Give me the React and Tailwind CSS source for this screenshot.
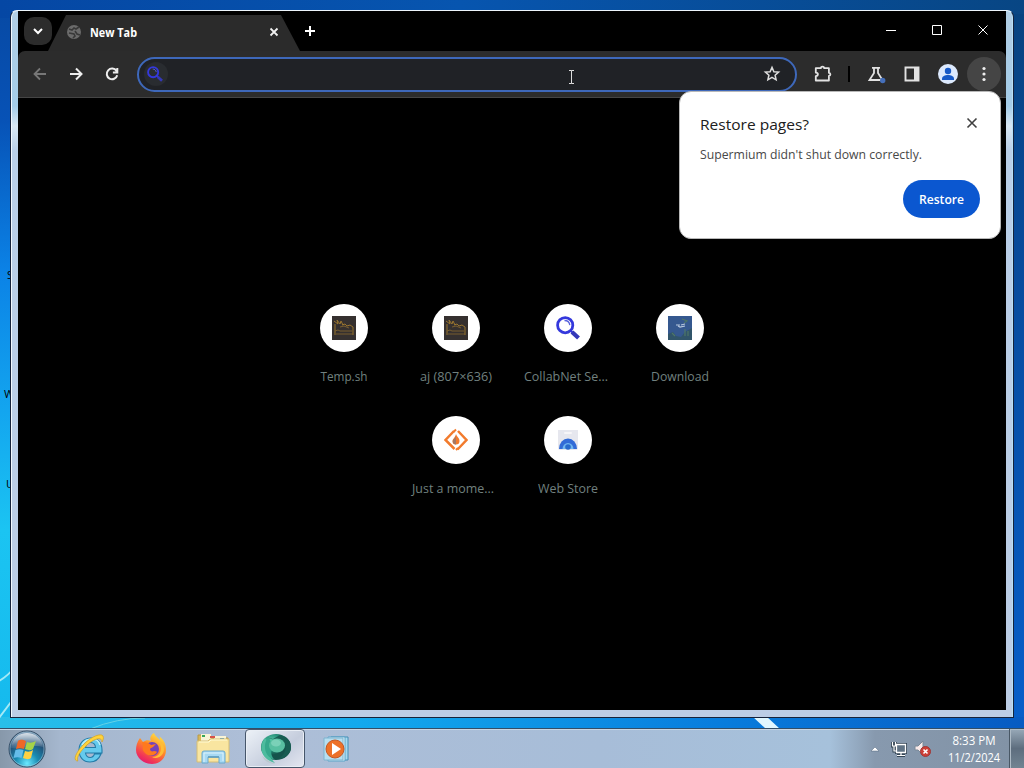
import React from "react";

const TempIcon = () => (
  <svg className="size-6" viewBox="0 0 24 24" fill="none">
    <path d="M0 0h24v24H0z" fill="#35302f" />
    <path d="M2 5l4 3-1-4 3 4 1-3 2 4M3 8v11M21 11v8M10 9l3-1 2 2 3-1 3 2" stroke="#99752f" strokeWidth="1" />
    <path d="M3 15l3-1 2 1h12M4 18h17M8 11l4-1 5 2" stroke="#806330" strokeWidth=".9" />
  </svg>
);

const LensIcon = ({ className }) => (
  <svg className={className} viewBox="0 0 24 24" fill="none">
    <circle cx="9.2" cy="9.2" r="7.6" stroke="#3438dc" strokeWidth="2.8" />
    <path d="M8.5 4.5c3 0 5 2 5.300 4.600" stroke="#5b64de" strokeWidth="1.300" />
    <path d="M14.500 14.500l2 2" stroke="#3438dc" strokeWidth="2" />
    <path d="M16 16l6.500 6" stroke="#3438b8" strokeWidth="4.200" />
  </svg>
);

const DownloadIcon = () => (
  <svg className="size-6" viewBox="0 0 24 24" fill="none">
    <path d="M0 0h24v24H0z" fill="#35588f" />
    <path d="M0 18l5-2 3 4 5 1 4-5 7-4v12H0z" fill="#31556a" />
    <path d="M14 3l5 2-3 2M4 17l3 3M17 13v7M20 15v5" stroke="#4e7668" strokeWidth="1.200" />
    <path d="M8 9h4m1 0l4-1M10 10l2 1 5-1" stroke="#b8c8df" strokeWidth="1.200" />
  </svg>
);

const FlameIcon = () => (
  <svg className="size-6" viewBox="0 0 24 24" fill="none">
    <path d="M10 3l-8.500 9 9 9M14 3l8.500 9-9 9.500" stroke="#f27b2d" strokeWidth="2.500" />
    <path d="M12 1.500L9.500 4M14 20l-2 2" stroke="#f27b2d" strokeWidth="2" />
    <path d="M12 6c1 3 3.500 4 3.500 7a3.500 3.500 0 01-7 0c0-2 3-4 3.500-7z" fill="#f27b2d" />
    <path d="M12 8v8.500c-2 0-3.300-1-3.300-3.300C8.700 11.500 11.500 10 12 8z" fill="#a67863" />
  </svg>
);

const StoreIcon = () => (
  <svg className="size-6" viewBox="0 0 24 24" fill="none">
    <path d="M2 2h20v18a2 2 0 01-2 2H4a2 2 0 01-2-2z" fill="#e6e7ee" />
    <rect x="8" y="4" width="8" height="2" rx="1" fill="#f7f6f8" />
    <path d="M3 21a9 10.500 0 0118 0z" fill="#326bd7" />
    <path d="M6.500 21a5.500 6 0 0111 0z" fill="#70b6ef" />
    <circle cx="12" cy="19" r="2.800" fill="#2869cc" />
  </svg>
);

const Tile = ({ label, children, width, center = 56 }) => (
  <div className="flex h-28 w-28 flex-col items-center pt-4">
    <div className="flex size-12 shrink-0 items-center justify-center rounded-full bg-white">{children}</div>
    <svg className="mt-[15px] h-5 w-28 overflow-visible" viewBox="0 0 112 20">
      <text x={center} y="14" textAnchor="middle" textLength={width} lengthAdjust="spacingAndGlyphs" className="fill-[#71807f] text-[13px]">{label}</text>
    </svg>
  </div>
);

const StartIcon = () => (
  <svg className="size-[38px]" viewBox="0 0 38 38">
    <defs>
      <radialGradient id="orb" cx="50%" cy="90%" r="90%">
        <stop stopColor="#6ce9ff" /><stop offset=".35" stopColor="#188bb2" /><stop offset=".7" stopColor="#234f76" /><stop offset="1" stopColor="#7a97b3" />
      </radialGradient>
      <linearGradient id="shine" x2="0" y2="1"><stop stopColor="#fff" stopOpacity=".75" /><stop offset="1" stopColor="#fff" stopOpacity=".08" /></linearGradient>
    </defs>
    <circle cx="19" cy="19" r="18" fill="url(#orb)" stroke="#354d65" />
    <circle cx="19" cy="19" r="17" fill="none" stroke="#b1d6e5" strokeOpacity=".5" />
    <path d="M3 18C4 8 11 3 19 3s15 5 16 14c-9-3-21 2-32 1z" fill="url(#shine)" />
    <path d="M10 11c3-2 5-1 8 0l-2 8c-3-1-5-1-8 0z" fill="#ef6727" />
    <path d="M19 12c3 1 5 1 9-1l-3 8c-3 2-5 1-8 0z" fill="#a5d348" />
    <path d="M7.500 20c3-1 5-1 8 0l-2 8c-3-1-5-1-8 0z" fill="#65bce9" />
    <path d="M17 21c3 1 5 1 8-1l-2 8c-3 2-5 1-8 0z" fill="#ffd143" />
  </svg>
);

const ExplorerIcon = () => (
  <svg className="size-8" viewBox="0 0 32 32" fill="none">
    <path d="M28 21c-2 5-6 8-11 8C10 29 6 24 6 17S11 5 18 5s11 5 11 12v3H12.500c.5 3 2 4.500 4.700 4.500 2 0 3.300-1 4.300-3.500zM12.500 14.500h10c0-3-2-5-5-5s-4.500 2-5 5z" fill="#65caed" stroke="#237ca8" strokeWidth="1.100" />
    <path d="M9 12c2-4 6-6 10-6 4 0 7 2 8 6" stroke="#baf0fb" strokeWidth="1.500" />
    <path d="M5 28C-1 28 3 19 11 11 19 3 28 0 30 3c1 2 0 4-1 6 0-7-11-2-18 6-5 5-8 11-6 13z" fill="#ffd33c" stroke="#d1a126" strokeWidth=".7" />
  </svg>
);

const FirefoxIcon = () => (
  <svg className="size-8" viewBox="0 0 32 32">
    <defs>
      <linearGradient id="fox" x1=".8" y1="0" x2=".25" y2="1"><stop stopColor="#ffe94a" /><stop offset=".45" stopColor="#ff8a28" /><stop offset=".8" stopColor="#f23756" /><stop offset="1" stopColor="#e01674" /></linearGradient>
    </defs>
    <path d="M5 5l3 4c3-2 5-2 8-1-2-4 1-7 3-8 1 3 3 4 6 7 0-2 0-3-1-4 5 4 7 8 7 14 0 8-6 14-14 14S1 25 1 17c0-4 1-8 4-12z" fill="url(#fox)" />
    <circle cx="17" cy="16" r="7" fill="#7541ba" />
    <path d="M7 9c5 0 7 1 9 3l5-1-3 3c-1 1-3 1-3 2 0 2 2 3 4 2 2 0 3 1 3 1-2 4-8 5-12 1-2-2-3-4-2-7z" fill="#ff791e" />
    <path d="M17 7c6 0 9 4 9 8 0 6-4 9-9 9 5 3 12-1 12-8S23 7 17 7z" fill="#ffbd36" />
  </svg>
);

const FolderIcon = () => (
  <svg className="h-[31px] w-[35px]" viewBox="0 0 35 31">
    <path d="M2 2h12l2 3h16v23H2z" fill="#dab958" stroke="#b89a48" />
    <path d="M5 1h10v7H5zM18 3h12v6H18z" fill="#f9f4d6" />
    <path d="M6 2h3v2H6z" fill="#38a65a" /><path d="M14 3h5v2h-5z" fill="#d7534a" /><path d="M24 5h4v2h-4z" fill="#4e9ccd" />
    <path d="M1 8h11l2-2h19v23H1z" fill="#f9e5a0" stroke="#d4bd76" />
    <path d="M3 9h10l2-2h16" stroke="#fffbd5" fill="none" />
    <path d="M6 30V20q0-2 2-2h19q2 0 2 2v10h-6v-6H12v6z" fill="#a7d9f3" stroke="#6ba9cd" />
    <path d="M8 29v-9h19v8" stroke="#dcf3fc" fill="none" />
    <path d="M12 24h11" stroke="#5c9bbd" strokeWidth="1.500" />
  </svg>
);

const GlobeBrowserIcon = () => (
  <svg className="h-8 w-[34px]" viewBox="0 0 34 32">
    <defs><radialGradient id="teal" cx=".35" cy=".3"><stop stopColor="#63d4b1" /><stop offset=".65" stopColor="#238c76" /><stop offset="1" stopColor="#15534b" /></radialGradient></defs>
    <ellipse cx="18" cy="14" rx="15" ry="13" fill="url(#teal)" />
    <path d="M8 4l7 2 7-4c8 2 11 7 11 12 0 7-5 11-12 12 4-4 8-8 6-14-3-5-10-4-19-8z" fill="#185d52" />
    <path d="M7 5C1 12 1 25 17 30c-5-5-6-9-3-15z" fill="#4cbc9e" />
    <path d="M10 4c3 3 3 7 5 10-3 4-2 10 2 13C7 24 4 13 10 4z" fill="#35a88c" />
    <ellipse cx="19" cy="12.500" rx="8" ry="7" fill="#58bfa1" />
    <ellipse cx="18" cy="10" rx="5" ry="3.500" fill="#7bd1b8" />
    <path d="M7 25q4 4 11 6-10 0-14-8" fill="#b9c8cc" />
  </svg>
);

const PlayerIcon = () => (
  <svg className="h-[26px] w-7" viewBox="0 0 28 26">
    <path d="M8 1h17v23H8z" fill="#a7d9ef" stroke="#438db4" /><path d="M5 1h17v24H5z" fill="#e6f5fa" stroke="#5aa5ca" />
    <path d="M1 2h19v22H1z" fill="#b7dff0" stroke="#7fb4cf" />
    <circle cx="12" cy="13" r="9" fill="#ed7128" stroke="#c45723" /><path d="M9 7l9 6-9 6z" fill="#fff" />
  </svg>
);

export default function App() {
  return (
    <div className="relative flex h-[768px] w-[1024px] flex-col overflow-hidden bg-[linear-gradient(180deg,#0749a3_0px,#0752b6_120px,#0b82e6_270px,#13a5ef_410px,#1bc4f2_530px,#15b9ed_728px)] font-['Open_Sans','Noto_Sans',sans-serif]">
      <svg className="absolute inset-0 size-full" viewBox="0 0 1024 768">
        <defs>
          <linearGradient id="bottomSky"><stop stopColor="#28bfe9" /><stop offset=".35" stopColor="#13a9ed" /><stop offset=".7" stopColor="#087ddd" /><stop offset="1" stopColor="#075bc2" /></linearGradient>
          <linearGradient id="rightSky" x2="0" y2="1"><stop stopColor="#074380" /><stop offset=".35" stopColor="#074b9c" /><stop offset="1" stopColor="#075fca" /></linearGradient>
          <linearGradient id="topSky"><stop stopColor="#0547a4" /><stop offset=".45" stopColor="#0755af" /><stop offset="1" stopColor="#084684" /></linearGradient>
        </defs>
        <path d="M0 0h1024v18H0z" fill="url(#topSky)" />
        <path d="M1008 14h16v714h-16z" fill="url(#rightSky)" />
        <path d="M0 717h1024v12H0z" fill="url(#bottomSky)" />
        <path d="M-3 682q10-5 18-15M-1 718l12-16" stroke="#a4e9f6" strokeWidth="2" fill="none" />
        <path d="M752 716h14l14 13h-14z" fill="#e1f7ff" />
        <path d="M90 729q27-11 55-11" stroke="#64d2e6" fill="none" />
      </svg>

      <span className="absolute left-[7px] top-[267px] text-[11px] text-black">S</span>
      <span className="absolute left-[4px] top-[386px] text-[11px] text-black">W</span>
      <span className="absolute left-[6px] top-[476px] text-[11px] text-black">U</span>

      <main className="relative ml-[10px] mt-[10px] flex h-[708px] w-[1004px] shrink-0 flex-col rounded-t-[7px] border border-[#17233b] border-t-[#eef6fc] bg-[linear-gradient(180deg,#b1cee5_0px,#a4cce8_95px,#d8e7f3_115px,#b9cfe8_140px,#bccde5_100%)] px-[7px] pb-[7px] shadow-[inset_1px_0_#f2f9ff,inset_-1px_0_#b7e0f6]">
        <div className="flex h-[40px] shrink-0 bg-black pl-[6px]">
          <button className="mt-[6px] flex size-7 shrink-0 items-center justify-center rounded-[10px] bg-[#2c2c2c]">
            <svg className="size-[18px]" viewBox="0 0 18 18" fill="none"><path d="M5 7l4 4 4-4" stroke="#fff" strokeWidth="2" /></svg>
          </button>
          <div className="-ml-[4px] mt-[4px] flex h-[36px] w-[252px] items-center bg-[#2b2b2b] pb-[3px] pl-[18px] pr-[18px] [clip-path:polygon(18px_0,233px_0,252px_100%,0_100%)]">
            <svg className="size-4" viewBox="0 0 16 16"><circle cx="8" cy="8" r="7" fill="#6b6b6b" /><path d="M3 5l3 1 2-2 2 1 3-2M3 9l5 1 1 2-2 2M9 7l2 3 3 1" fill="none" stroke="#383838" strokeWidth="1.600" /></svg>
            <svg className="ml-[8px] h-5 w-[100px]" viewBox="0 0 100 20"><text x="0" y="15" textLength="47" lengthAdjust="spacingAndGlyphs" className="fill-white text-[12.5px] font-bold">New Tab</text></svg>
            <svg className="ml-auto size-4" viewBox="0 0 16 16"><path d="M4.500 4.500l7 7m0-7l-7 7" stroke="#f1f1f1" strokeWidth="1.800" /></svg>
          </div>
          <svg className="mt-[10px] size-5" viewBox="0 0 20 20"><path d="M5 10h10M10 5v10" stroke="#fff" strokeWidth="2" /></svg>
          <div className="ml-auto mt-[9px] flex h-5 gap-[26px] pr-[13px]">
            <svg className="size-5" viewBox="0 0 20 20"><path d="M5 10.500h10" stroke="#fff" /></svg>
            <svg className="size-5" viewBox="0 0 20 20"><path d="M5.500 5.500h9v9h-9z" stroke="#fff" fill="none" /></svg>
            <svg className="size-5" viewBox="0 0 20 20"><path d="M5.500 5.500l9 9m0-9l-9 9" stroke="#fff" /></svg>
          </div>
        </div>

        <div className="flex h-[47px] shrink-0 bg-black">
          <div className="flex flex-1 items-center rounded-t-[7px] border-b border-[#454545] bg-[#2c2c2c] pl-[12px] pr-[5px]">
            <svg className="size-5 shrink-0" viewBox="0 0 20 20"><path d="M16 10H5m5-5.500L4.500 10l5.500 5.500" fill="none" stroke="#777" strokeWidth="1.800" /></svg>
            <svg className="ml-4 size-5 shrink-0" viewBox="0 0 20 20"><path d="M4 10h11m-5-5.500l5.500 5.500-5.500 5.500" fill="none" stroke="#eee" strokeWidth="2" /></svg>
            <svg className="ml-4 size-5 shrink-0" viewBox="0 0 20 20"><path d="M14.500 7A5.300 5.300 0 1015.200 11.200M15.300 4v4.400h-4.400" fill="none" stroke="#eee" strokeWidth="2" /></svg>
            <div className="ml-[15px] flex h-[35px] w-[660px] shrink-0 items-center rounded-full border-2 border-[#3e68ba] bg-[#202226] pl-[6px] pr-[13px]">
              <div className="-ml-px flex size-6 items-center justify-center rounded-full bg-[#292c30]"><LensIcon className="-ml-[2px] size-4" /></div>
              <svg className="ml-auto size-5" viewBox="0 0 20 20"><path d="M10 3.400l1.900 4.300 4.700.4-3.500 3.100 1 4.600-4.100-2.400-4.100 2.400 1-4.600-3.500-3.100 4.700-.4z" fill="none" stroke="#ddd" strokeWidth="1.500" /></svg>
            </div>
            <svg className="ml-[16px] size-5 shrink-0" viewBox="0 0 20 20"><path d="M2.800 4.200h5C7.800 2 11.200 2 11.200 4.200h4.700v4.600c2 .2 2 2.900 0 3.100v4.600H2.800v-4.400c2.800-.2 2.800-3.300 0-3.500z" fill="none" stroke="#e2e2e2" strokeWidth="1.800" strokeLinejoin="round" /></svg>
            <i className="ml-[15px] h-4 w-[2px] bg-black" />
            <svg className="ml-[16px] size-5 shrink-0" viewBox="0 0 20 20"><path d="M6 3.800h8M8 4v5l-4.500 7h13L12 9V4" fill="none" stroke="#e2e2e2" strokeWidth="1.800" /><circle cx="16.700" cy="16.500" r="2.700" fill="#456fba" /></svg>
            <svg className="ml-4 size-5 shrink-0" viewBox="0 0 20 20"><path d="M3.500 3.500h13v13h-13z" fill="none" stroke="#e2e2e2" strokeWidth="1.900" /><path d="M12 3h5v14h-5z" fill="#e2e2e2" /></svg>
            <svg className="ml-4 size-5 shrink-0" viewBox="0 0 20 20"><circle cx="10" cy="10" r="10" fill="#dce9fd" /><circle cx="10" cy="7" r="3.200" fill="#1659c7" /><path d="M4 15c0-3 3-4 6-4s6 1 6 4v1H4z" fill="#1659c7" /></svg>
            <div className="ml-[9px] flex size-[34px] shrink-0 items-center justify-center rounded-full bg-[#454545]"><svg className="size-5" viewBox="0 0 20 20" fill="#eee"><circle cx="10" cy="4.500" r="1.600" /><circle cx="10" cy="10" r="1.600" /><circle cx="10" cy="15.500" r="1.600" /></svg></div>
          </div>
        </div>

        <section className="flex flex-1 justify-center bg-black pt-[190px]">
          <div className="flex h-56 w-[448px] flex-wrap content-start justify-center">
            <Tile label="Temp.sh" width="47"><TempIcon /></Tile>
            <Tile label="aj (807×636)" width="72"><TempIcon /></Tile>
            <Tile label="CollabNet Se..." width="84" center="54"><LensIcon className="size-6" /></Tile>
            <Tile label="Download" width="58"><DownloadIcon /></Tile>
            <Tile label="Just a mome..." width="82" center="53"><FlameIcon /></Tile>
            <Tile label="Web Store" width="60"><StoreIcon /></Tile>
          </div>
        </section>
      </main>

      <aside className="absolute left-[679px] top-[91px] flex h-[148px] w-[322px] flex-col rounded-[12px] border border-[#b8b8b8] bg-white px-5 pb-5 pt-[20px]">
        <div className="flex h-[26px] justify-between">
          <svg className="h-[26px] w-[150px]" viewBox="0 0 150 26"><text x="0" y="18" textLength="109" lengthAdjust="spacingAndGlyphs" className="fill-[#202020] text-[15px]">Restore pages?</text></svg>
          <svg className="-mr-[2px] mt-[1px] size-5" viewBox="0 0 20 20"><path d="M5.500 5.500l9 9m0-9l-9 9" stroke="#404040" strokeWidth="1.600" /></svg>
        </div>
        <svg className="mt-[7px] h-5 w-[280px]" viewBox="0 0 280 20"><text x="0" y="14" textLength="222" lengthAdjust="spacingAndGlyphs" className="fill-[#484848] text-[13px]">Supermium didn't shut down correctly.</text></svg>
        <button className="ml-auto mt-auto flex h-[38px] w-[77px] items-center justify-center rounded-full bg-[#0b57d0]"><svg className="h-6 w-[61px] shrink-0" viewBox="0 0 61 24"><text x="8" y="17" textLength="45" lengthAdjust="spacingAndGlyphs" className="fill-white text-[13px] font-semibold">Restore</text></svg></button>
      </aside>

      <svg className="absolute left-[566px] top-[69px] h-4 w-3" viewBox="0 0 12 16"><path d="M3 1.500h2.500v13H3M5.500 1.500H8M5.500 14.500H8" fill="none" stroke="#ddd" /></svg>

      <footer className="relative mt-auto flex h-10 shrink-0 items-center border-t border-[#334e67] bg-[linear-gradient(90deg,#8798aa_0px,#a5b7ce_60px,#adbed7_245px,#a7bdd8_600px,#a6c1db_830px,#8799ae_875px,#8293a6_1010px)] pl-2 shadow-[inset_0_1px_#c7d6e5]">
        <StartIcon />
        <div className="ml-[27px]"><ExplorerIcon /></div>
        <div className="ml-[30px]"><FirefoxIcon /></div>
        <div className="ml-[29px]"><FolderIcon /></div>
        <div className="ml-[14px] flex h-[39px] w-[60px] items-center justify-center rounded-sm border border-[#46566b] bg-[linear-gradient(140deg,#edf2f8,#c5cddd_60%,#e4e7f1)] shadow-[inset_0_0_0_1px_#e9eef5]"><GlobeBrowserIcon /></div>
        <div className="ml-[18px]"><PlayerIcon /></div>
        <svg className="ml-auto h-3 w-3" viewBox="0 0 12 12"><path d="M2 8l4-4 4 4z" fill="#fff" stroke="#52677d" strokeWidth=".5" /></svg>
        <svg className="ml-[10px] size-4" viewBox="0 0 16 16" fill="none"><path d="M5.500 3.500h9v8h-9zM1.500 1v4h3V1M3 5v5h2M10 12v2M6 14.500h8" stroke="#334454" strokeWidth="3" /><path d="M5.500 3.500h9v8h-9z" fill="#607385" stroke="#fff" strokeWidth="1.300" /><path d="M1.500 1v4h3V1M3 5v5h2M10 12v2M6 14.500h8" stroke="#fff" strokeWidth="1.200" /></svg>
        <svg className="ml-[7px] size-[17px]" viewBox="0 0 17 17"><path d="M1 6h3l5-5v14l-5-5H1z" fill="#f8e9e8" stroke="#788897" /><circle cx="11.500" cy="11.500" r="5" fill="#cd3f36" stroke="#9f3837" /><path d="M9.500 9.500l4 4m0-4l-4 4" stroke="#fff" strokeWidth="1.600" /></svg>
        <svg className="ml-[13px] h-[39px] w-[60px]" viewBox="0 0 60 39"><text x="30" y="16" textAnchor="middle" textLength="43" lengthAdjust="spacingAndGlyphs" className="fill-white text-[12px]">8:33 PM</text><text x="30" y="33" textAnchor="middle" textLength="52" lengthAdjust="spacingAndGlyphs" className="fill-white text-[12px]">11/2/2024</text></svg>
        <i className="ml-[5px] h-[39px] w-[15px] border-l border-[#485765] bg-[linear-gradient(180deg,#98a9b8,#5d6d7e_50%,#718492)] shadow-[inset_1px_1px_#adbac5]" />
      </footer>
    </div>
  );
}
